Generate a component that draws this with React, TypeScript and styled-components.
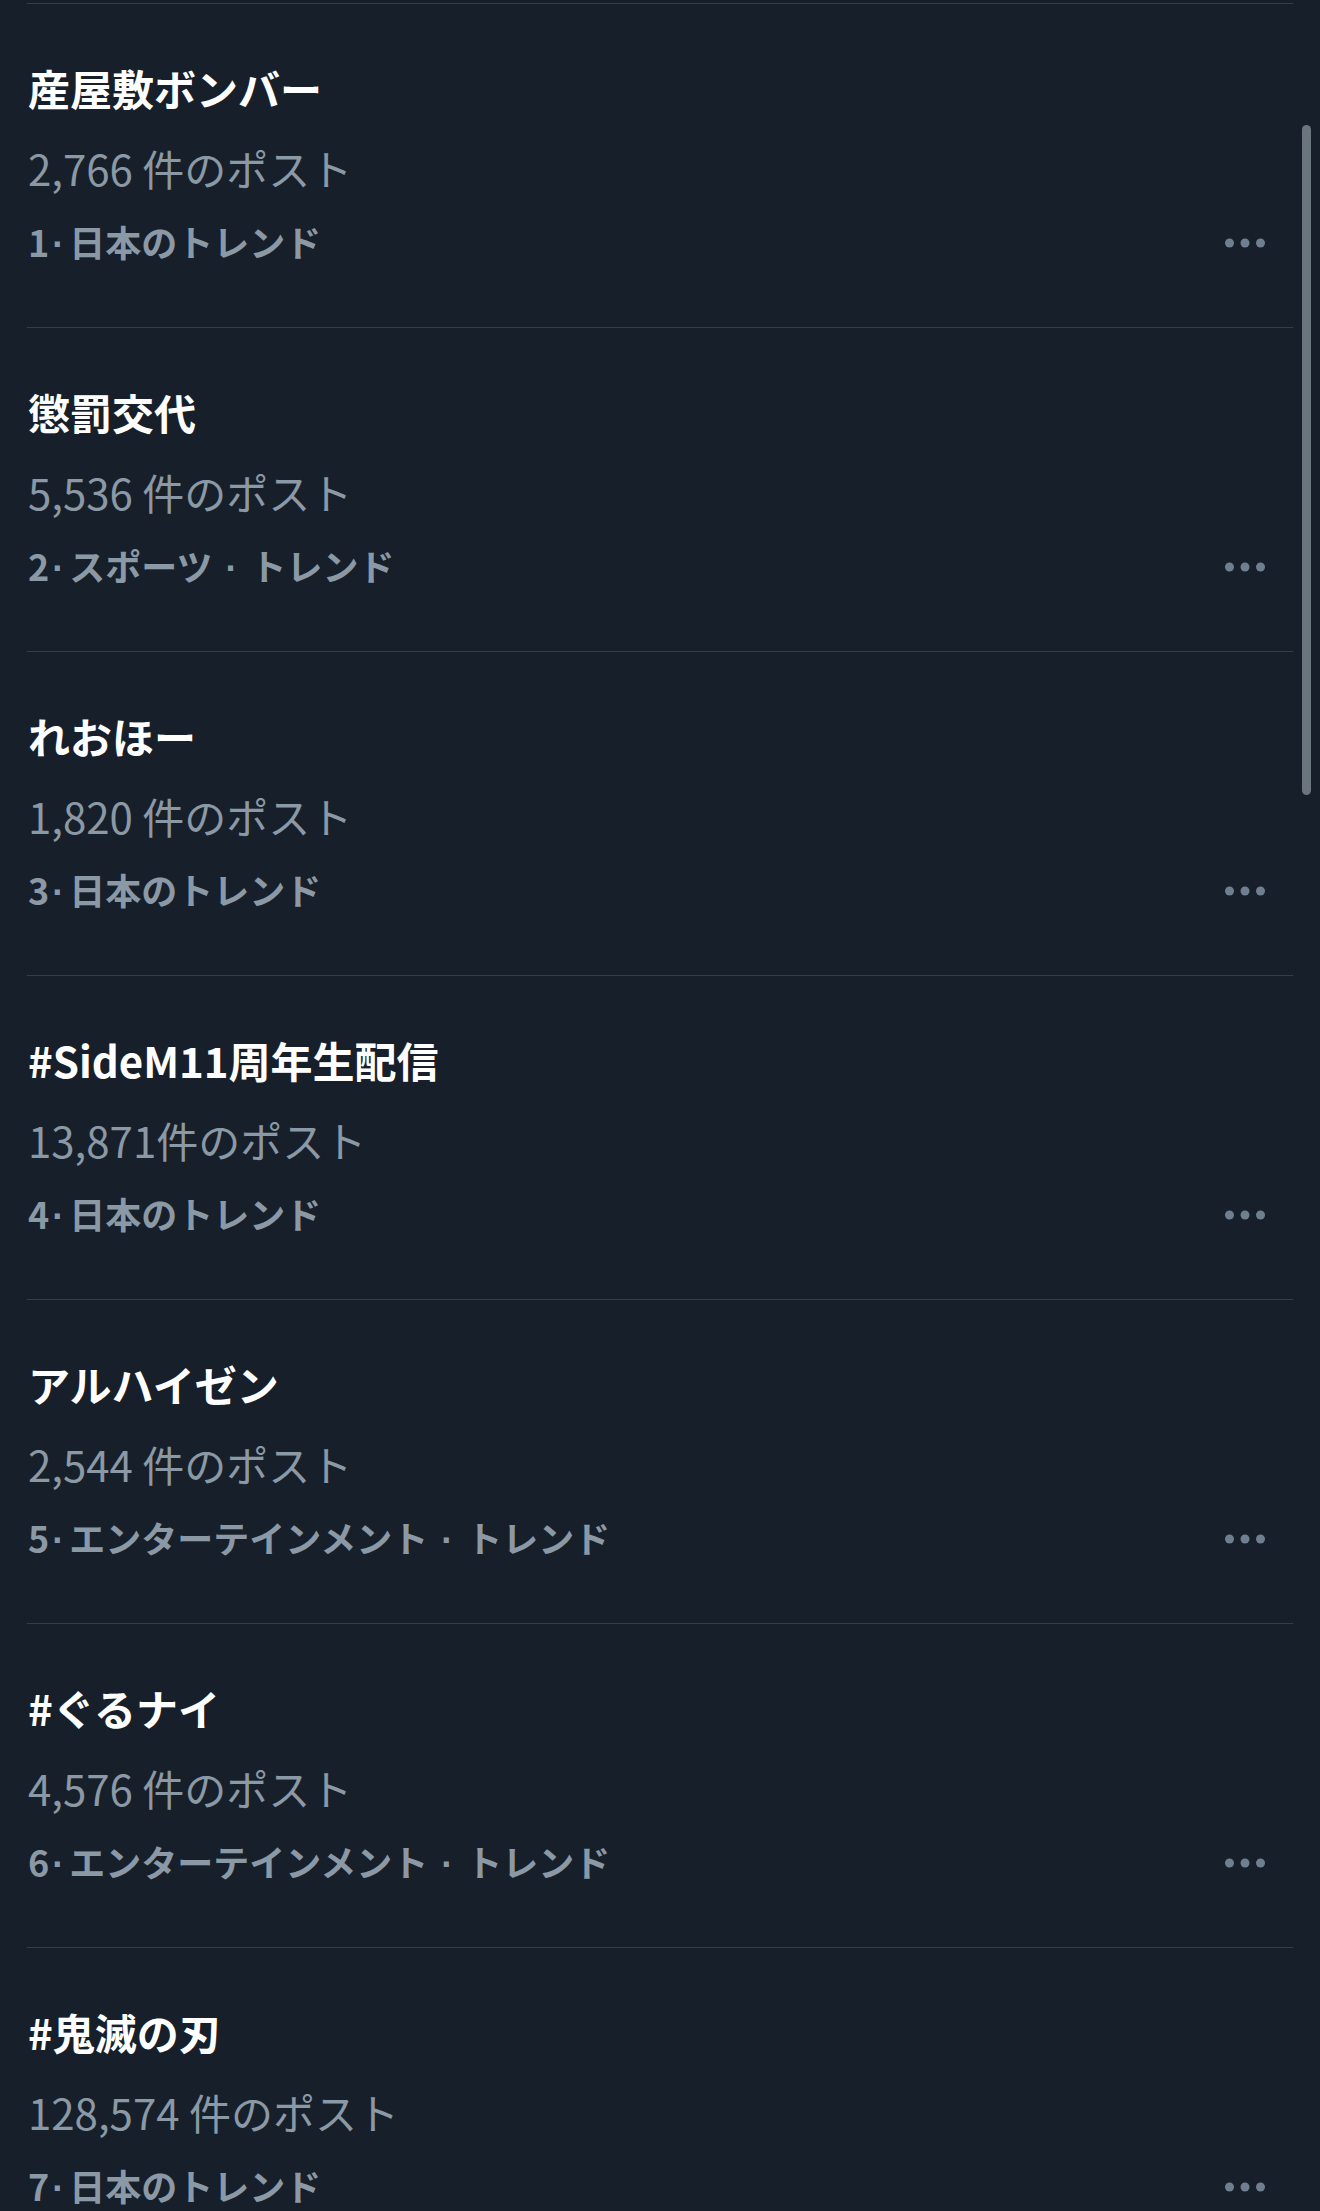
import React from "react";
import styled, { createGlobalStyle } from "styled-components";

const GlobalStyle = createGlobalStyle`
  html, body {
    margin: 0;
    padding: 0;
    background: #17202a;
    overflow: hidden;
  }
  body {
    font-family: "Noto Sans CJK JP", "Noto Sans", sans-serif;
    -webkit-font-smoothing: antialiased;
  }
`;

const Page = styled.div`
  position: relative;
  width: 1320px;
  height: 2211px;
  background: #17202a;
  overflow: hidden;
`;

const List = styled.div`
  display: flex;
  flex-direction: column;
  padding: 0 27px;
`;

const CutRow = styled.div`
  height: 3px;
  border-bottom: 1px solid #343e48;
`;

const Row = styled.div`
  display: flex;
  flex-direction: column;
  padding: 54px 0 59px 1px;
  border-bottom: 1px solid #343e48;
`;

const Title = styled.div`
  color: #ffffff;
  font-size: 42px;
  font-weight: 700;
  line-height: 60px;
  white-space: nowrap;
`;

const Count = styled.div`
  margin-top: 20px;
  color: #8b98a5;
  font-size: 42px;
  font-weight: 400;
  line-height: 60px;
  white-space: nowrap;
`;

const MetaRow = styled.div`
  margin-top: 20px;
  display: flex;
  align-items: center;
  justify-content: space-between;
  height: 50px;
`;

const Meta = styled.div`
  color: #8b98a5;
  font-size: 36px;
  font-weight: 700;
  line-height: 50px;
  white-space: nowrap;
`;

const Sep = styled.span<{ $wide?: boolean }>`
  font-family: "Liberation Sans", Arial, sans-serif;
  font-weight: 700;
  margin: ${(p) => (p.$wide ? "0 13px" : "0 5px 0 3px")};
`;

const More = styled.svg`
  width: 40px;
  height: 10px;
  margin-right: 28px;
  flex-shrink: 0;
`;

const Scrollbar = styled.div`
  position: absolute;
  top: 125px;
  left: 1302px;
  width: 9px;
  height: 670px;
  border-radius: 5px;
  background: #6b757e;
`;

type Trend = { title: string; count: string; meta: string[] };

const trends: Trend[] = [
  { title: "産屋敷ボンバー", count: "2,766 件のポスト", meta: ["1", "日本のトレンド"] },
  { title: "懲罰交代", count: "5,536 件のポスト", meta: ["2", "スポーツ", "トレンド"] },
  { title: "れおほー", count: "1,820 件のポスト", meta: ["3", "日本のトレンド"] },
  { title: "#SideM11周年生配信", count: "13,871件のポスト", meta: ["4", "日本のトレンド"] },
  { title: "アルハイゼン", count: "2,544 件のポスト", meta: ["5", "エンターテインメント", "トレンド"] },
  { title: "#ぐるナイ", count: "4,576 件のポスト", meta: ["6", "エンターテインメント", "トレンド"] },
  { title: "#鬼滅の刃", count: "128,574 件のポスト", meta: ["7", "日本のトレンド"] },
];

const MoreIcon = () => (
  <More viewBox="0 0 40 10">
    <circle cx="4.5" cy="5" r="4.5" fill="#6e7f90" />
    <circle cx="20" cy="5" r="4.5" fill="#6e7f90" />
    <circle cx="35.5" cy="5" r="4.5" fill="#6e7f90" />
  </More>
);

export default function App() {
  return (
    <Page>
      <GlobalStyle />
      <List>
        <CutRow />
        {trends.map((t) => (
          <Row key={t.title}>
            <Title>{t.title}</Title>
            <Count>{t.count}</Count>
            <MetaRow>
              <Meta>
                {t.meta.map((part, i) => (
                  <React.Fragment key={i}>
                    {i > 0 && <Sep $wide={i > 1}>·</Sep>}
                    {part}
                  </React.Fragment>
                ))}
              </Meta>
              <MoreIcon />
            </MetaRow>
          </Row>
        ))}
      </List>
      <Scrollbar />
    </Page>
  );
}
